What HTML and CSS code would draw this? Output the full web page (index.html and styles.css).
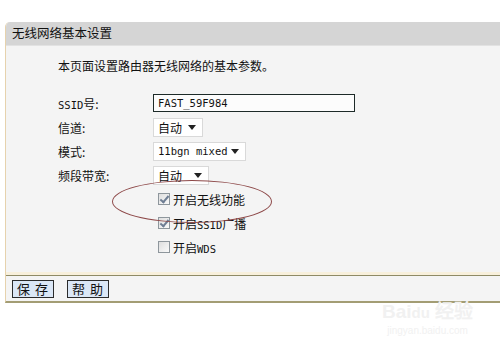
FILE: index.html
```
<!DOCTYPE html>
<html lang="zh-CN">
<head>
    <meta charset="UTF-8">
    <title>无线网络基本设置</title>
    <link rel="stylesheet" href="styles.css">
</head>
<body>
    <div class="panel">
        <div class="panel-title">无线网络基本设置</div>
        <div class="panel-body">
            <p class="desc">本页面设置路由器无线网络的基本参数。</p>
            <div class="form">
                <div class="label"><span><span class="en">SSID</span>号:</span></div>
                <div class="field"><div class="text-input"><span class="en">FAST_59F984</span></div></div>

                <div class="label">信道:</div>
                <div class="field"><div class="select w50">自动<span class="arrow"></span></div></div>

                <div class="label">模式:</div>
                <div class="field"><div class="select w93"><span class="en">11bgn mixed</span><span class="arrow"></span></div></div>

                <div class="label">频段带宽:</div>
                <div class="field"><div class="select w56">自动<span class="arrow"></span></div></div>

                <div class="label"></div>
                <div class="field"><span class="check on"></span><span>开启无线功能</span></div>

                <div class="label"></div>
                <div class="field"><span class="check on"></span><span>开启<span class="en">SSID</span>广播</span></div>

                <div class="label"></div>
                <div class="field"><span class="check"></span><span>开启<span class="en">WDS</span></span></div>
            </div>
        </div>
        <div class="panel-foot">
            <button class="btn">保&nbsp;存</button>
            <button class="btn">帮&nbsp;助</button>
        </div>
    </div>

    <div class="circle"></div>

    <div class="watermark">
        <div class="wm-logo">Bai<span class="wm-du">du</span> 经验</div>
        <div class="wm-url">jingyan.baidu.com</div>
    </div>
</body>
</html>
```

FILE: styles.css
```
body {
    margin: 0;
    background: #fff;
    font-family: "Noto Sans CJK SC", sans-serif;
    font-size: 12px;
    color: #111;
}
.en {
    font-family: "DejaVu Sans Mono", monospace;
    font-size: 10.5px;
}
.panel {
    margin: 22px 0 0 5px;
    border-left: 1px solid #e6d2ad;
    border-bottom: 2px solid #a39d74;
    border-top-left-radius: 5px;
    overflow: hidden;
}
.panel-title {
    height: 23px;
    line-height: 22px;
    padding-left: 6px;
    background: #d5d5d5;
    border-bottom: 1px solid #e2e2e2;
    font-size: 12.5px;
}
.panel-body {
    background: #f4f4f4;
    height: 222px;
    padding-top: 4px;
    border-bottom: 3px solid #f8f0dc;
}
.desc {
    margin: 9px 0 0 52px;
    line-height: 14px;
}
.form {
    display: grid;
    grid-template-columns: 95px auto;
    grid-auto-rows: 24px;
    margin: 18px 0 0 52px;
}
.label, .field {
    display: flex;
    align-items: center;
}
.text-input {
    box-sizing: border-box;
    width: 202px;
    height: 18px;
    border: 1px solid #1d2a28;
    background: #fcfcfc;
    padding-left: 4px;
    display: flex;
    align-items: center;
}
.select {
    box-sizing: border-box;
    height: 19px;
    border: 1px solid #d9d9d9;
    background: #fff;
    display: flex;
    align-items: center;
    justify-content: space-between;
    padding: 0 6px 0 4px;
}
.w50 { width: 50px; }
.w56 { width: 56px; }
.w93 { width: 93px; }
.arrow {
    width: 0;
    height: 0;
    border-left: 4px solid transparent;
    border-right: 4px solid transparent;
    border-top: 5px solid #222;
}
.check {
    box-sizing: border-box;
    width: 12px;
    height: 12px;
    margin: 0 3px 0 5px;
    border: 1px solid #8e969c;
    background: linear-gradient(135deg, #dedede, #fafafa);
    position: relative;
}
.check.on::after {
    content: "";
    position: absolute;
    left: 3px;
    top: 0;
    width: 3px;
    height: 7px;
    border-right: 2px solid #6f7e94;
    border-bottom: 2px solid #6f7e94;
    transform: rotate(40deg);
}
.panel-foot {
    background: #f4f4f4;
    border-top: 1px solid #8e8a66;
    height: 25px;
    display: flex;
    align-items: center;
    gap: 13px;
    padding-left: 6px;
}
.btn {
    width: 42px;
    height: 18px;
    padding: 0;
    border: 1px solid #2b2b2b;
    background: #dbe7f6;
    font-family: "Noto Sans CJK SC", sans-serif;
    font-size: 13px;
    line-height: 16px;
    letter-spacing: 1px;
    color: #111;
}
.circle {
    position: absolute;
    left: 112px;
    top: 180px;
    width: 158px;
    height: 41px;
    border: 1px solid #8d4848;
    border-radius: 50%;
}
.watermark {
    position: absolute;
    left: 382px;
    top: 296px;
    color: #f1f1f1;
    font-family: "Liberation Sans", sans-serif;
    text-align: center;
}
.wm-logo {
    font-size: 19px;
    font-weight: bold;
}
.wm-du {
    font-size: 15px;
}
.wm-url {
    font-size: 10px;
    margin-top: 2px;
}
```
